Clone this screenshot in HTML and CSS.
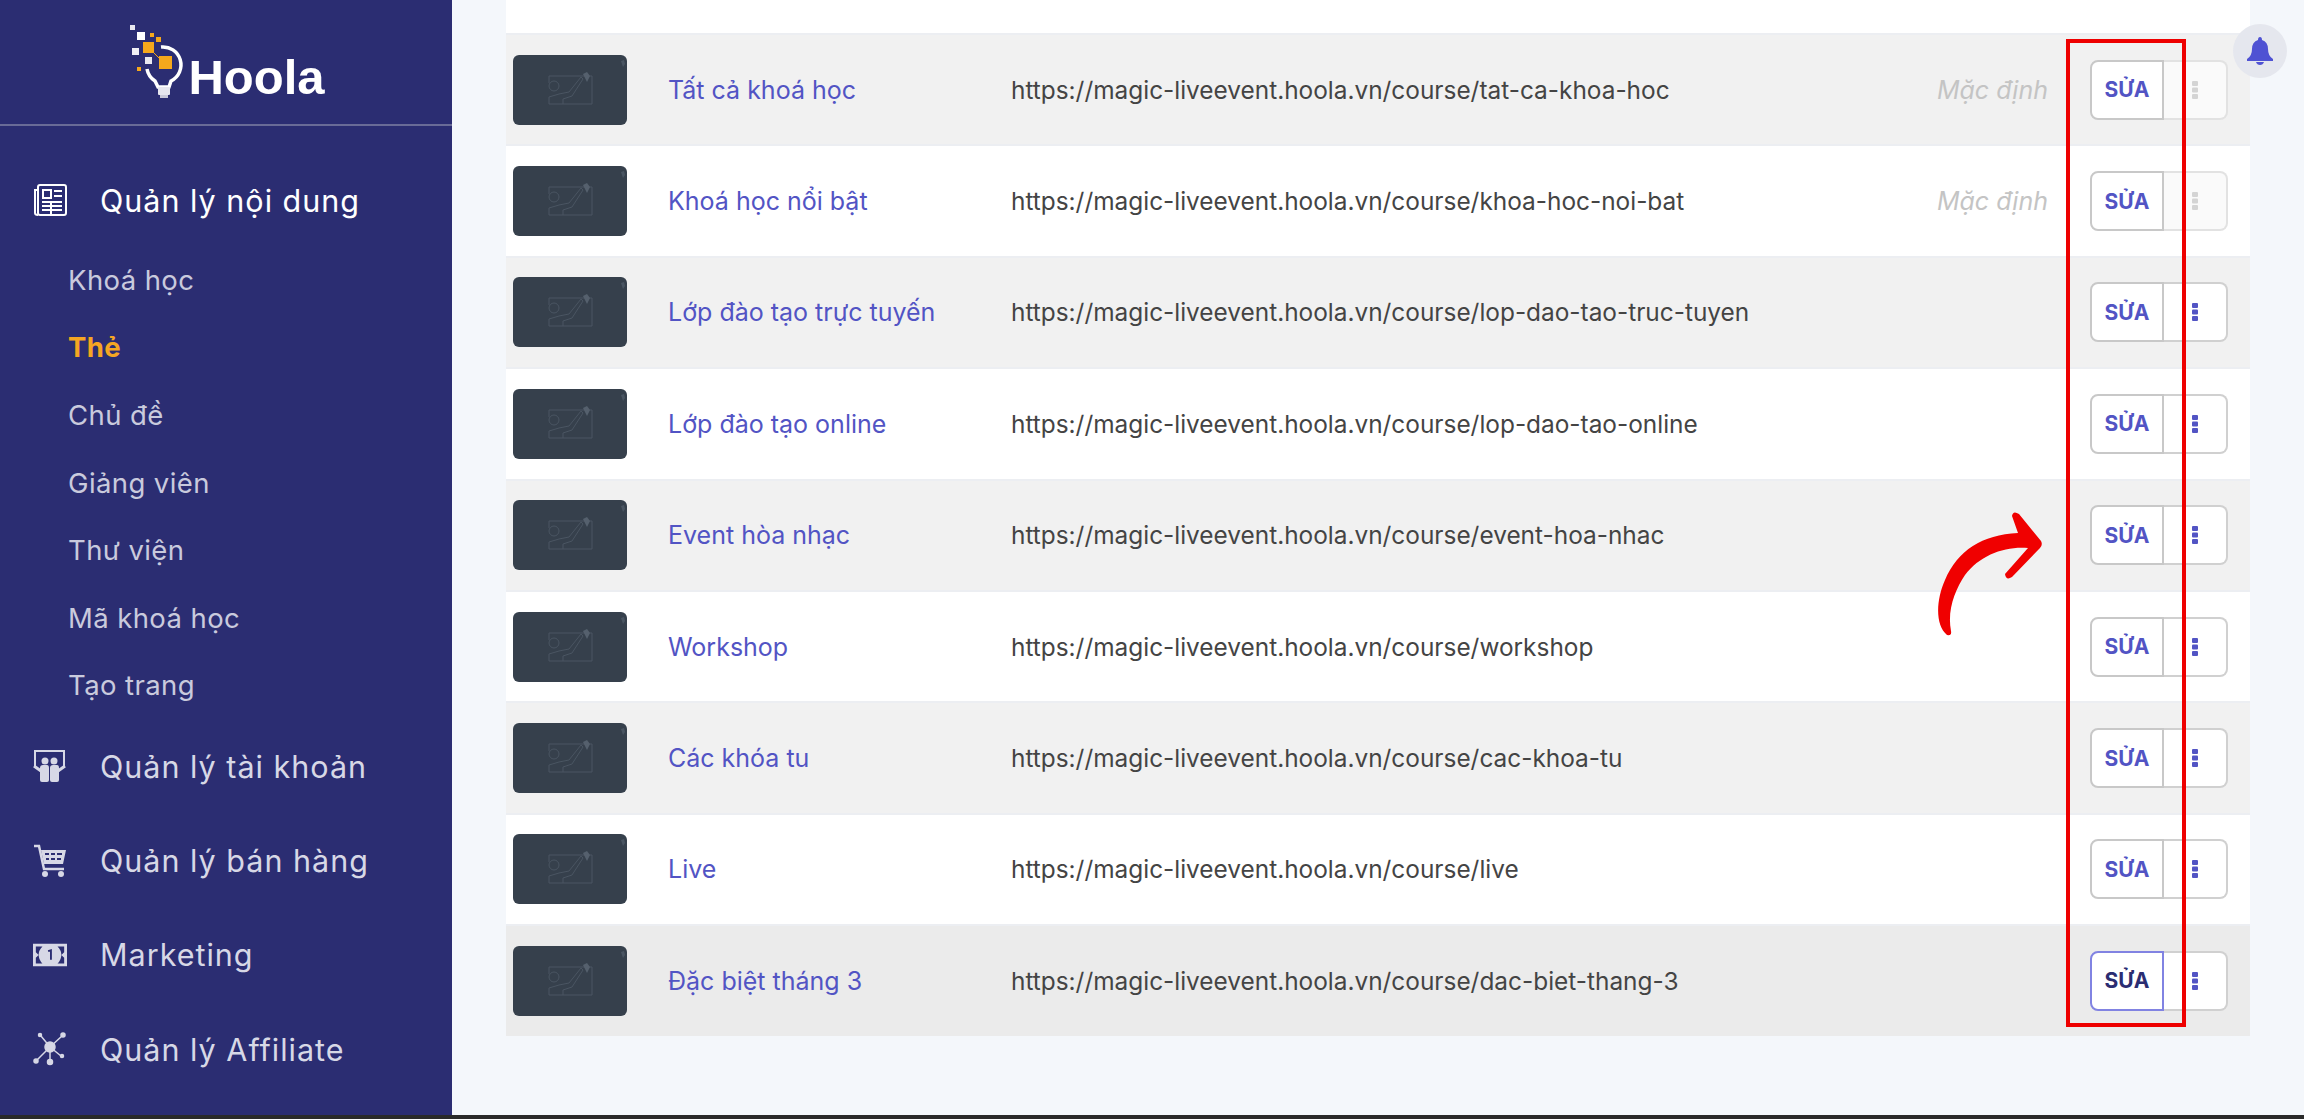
FILE: index.html
```html
<!DOCTYPE html>
<html lang="vi">
<head>
  <meta charset="UTF-8" />
  <title>Thẻ - Hoola</title>
  <link rel="stylesheet" href="styles.css">
</head>
<body>

  <!-- Shared thumbnail placeholder -->
  <svg class="defs" aria-hidden="true">
    <symbol id="thumb-icon" viewBox="0 0 114 70">
      <path d="M41 21H79V49H50M36 28V21H41" fill="none" stroke="#4a5562" stroke-width="1"/>
      <circle cx="41" cy="31" r="5" fill="none" stroke="#4a5562"/>
      <path d="M36 49V42L46 39 56 37 68 22 70 24 59 41 50 44V49Z" fill="none" stroke="#4a5562"/>
      <path d="M70 19L74 17 77 21 74 27 72 23Z" fill="#55606d"/>
      <path d="M108 6L111 5 112 9 110 12Z" fill="#4a5562"/>
    </symbol>
    <symbol id="dots" viewBox="0 0 6 18">
      <rect y="0" width="6" height="5" rx="1"/>
      <rect y="6.5" width="6" height="5" rx="1"/>
      <rect y="13" width="6" height="5" rx="1"/>
    </symbol>
  </svg>

  <div class="page">
    <!-- Sidebar -->
    <aside class="sidebar">
      <div class="logo">
        <svg class="logo-mark" width="54" height="74" viewBox="0 0 54 74">
          <rect x="0" y="0" width="5" height="5" fill="#e8e8f0"/>
          <rect x="7" y="7" width="8" height="8" fill="#fff"/>
          <rect x="20" y="8" width="4" height="4" fill="#f5a81c"/>
          <rect x="26" y="12" width="5" height="5" fill="#f5a81c"/>
          <rect x="13" y="17" width="11" height="11" fill="#f5a81c"/>
          <rect x="2" y="23" width="7" height="7" fill="#f0f0f5"/>
          <rect x="15" y="32" width="7" height="7" fill="#e8e8f0"/>
          <rect x="7" y="42" width="4" height="4" fill="#f5a81c"/>
          <rect x="29" y="31" width="13" height="13" fill="#f5a81c"/>
          <path d="M24 28L29 33" stroke="#f5a81c" stroke-width="1"/>
          <path d="M31 22A18 18 0 0 1 41 56L39 62H28L25 56A18 18 0 0 1 17 44" fill="none" stroke="#fff" stroke-width="3.5"/>
          <rect x="28" y="62" width="12" height="8" rx="1" fill="#e6e6ee"/>
          <rect x="30" y="70" width="8" height="3" fill="#c9c9d8"/>
        </svg>
        <span class="logo-text">Hoola</span>
      </div>

      <nav class="menu">
        <a class="menu-item active open" href="#">
          <svg class="menu-icon" viewBox="0 0 34 34" fill="none" stroke="currentColor" stroke-width="2">
            <rect x="5" y="2" width="28" height="30" rx="2"/>
            <path d="M5 7H2V30Q2 32 5 32"/>
            <rect x="10" y="7" width="8" height="8"/>
            <path d="M21 8H29M21 13H29M9 19H29M9 23H29M9 27H29M18 19V31"/>
          </svg>
          <span>Quản lý nội dung</span>
        </a>
        <div class="submenu">
          <a href="#">Khoá học</a>
          <a class="current" href="#">Thẻ</a>
          <a href="#">Chủ đề</a>
          <a href="#">Giảng viên</a>
          <a href="#">Thư viện</a>
          <a href="#">Mã khoá học</a>
          <a href="#">Tạo trang</a>
        </div>
        <a class="menu-item" href="#">
          <svg class="menu-icon" viewBox="0 0 34 34">
            <path d="M2 17V2H31V17" fill="none" stroke="currentColor" stroke-width="2"/>
            <path d="M1 17L8 22M32 17L25 22" fill="none" stroke="currentColor" stroke-width="3"/>
            <path d="M7 19Q7 16 10 16H14Q16 16 16 19V31Q16 33 14 33H9Q7 33 7 31Z" fill="currentColor"/>
            <path d="M17 19Q17 16 20 16H24Q26 16 26 19V31Q26 33 24 33H19Q17 33 17 31Z" fill="currentColor"/>
            <circle cx="12" cy="12" r="3.5" fill="currentColor"/>
            <circle cx="21" cy="12" r="3.5" fill="currentColor"/>
          </svg>
          <span>Quản lý tài khoản</span>
        </a>
        <a class="menu-item" href="#">
          <svg class="menu-icon" viewBox="0 0 34 34">
            <path d="M1 2H6L11 25H31" fill="none" stroke="currentColor" stroke-width="2.5"/>
            <path d="M8 6H33L30 20H11ZM12 9V11H16V9ZM18 9V11H22V9ZM24 9V11H29V9ZM13 14V16H16V14ZM18 14V16H22V14ZM24 14V16H28V14Z" fill="currentColor" fill-rule="evenodd"/>
            <circle cx="12" cy="30" r="3" fill="currentColor"/>
            <circle cx="28" cy="30" r="3" fill="currentColor"/>
          </svg>
          <span>Quản lý bán hàng</span>
        </a>
        <a class="menu-item" href="#">
          <svg class="menu-icon" viewBox="0 0 36 34">
            <path d="M0 5H36V29H0ZM3 8V14L6 17 3 20V26H10Q6 22 6 17T10 8ZM33 8H26Q30 12 30 17T26 26H33V20L30 17 33 14Z" fill="currentColor" fill-rule="evenodd"/>
            <circle cx="18" cy="17" r="8" fill="currentColor"/>
            <path d="M16 13L19 12V22" fill="none" stroke="#2b2d72" stroke-width="2"/>
          </svg>
          <span>Marketing</span>
        </a>
        <a class="menu-item" href="#">
          <svg class="menu-icon" viewBox="0 0 34 34" fill="currentColor" stroke="currentColor" stroke-width="1.5">
            <path d="M8 4L17 15 29 4M17 15L4 28M17 15V29M17 15L28 24" fill="none"/>
            <circle cx="17" cy="15" r="5"/>
            <circle cx="7" cy="3" r="1.5"/>
            <circle cx="30" cy="3" r="2"/>
            <circle cx="3" cy="29" r="2"/>
            <circle cx="17" cy="30" r="2.5"/>
            <circle cx="29" cy="24" r="1.5"/>
          </svg>
          <span>Quản lý Affiliate</span>
        </a>
      </nav>
    </aside>

    <!-- Main Content -->
    <main class="content">
      <div class="tag-table">
        <div class="table-top"></div>

        <div class="row">
          <svg class="thumb"><use href="#thumb-icon"/></svg>
          <a class="name" href="#">Tất cả khoá học</a>
          <span class="url">https://magic-liveevent.hoola.vn/course/tat-ca-khoa-hoc</span>
          <span class="default">Mặc định</span>
          <div class="actions"><button class="edit">SỬA</button><button class="more" disabled><svg><use href="#dots"/></svg></button></div>
        </div>

        <div class="row">
          <svg class="thumb"><use href="#thumb-icon"/></svg>
          <a class="name" href="#">Khoá học nổi bật</a>
          <span class="url">https://magic-liveevent.hoola.vn/course/khoa-hoc-noi-bat</span>
          <span class="default">Mặc định</span>
          <div class="actions"><button class="edit">SỬA</button><button class="more" disabled><svg><use href="#dots"/></svg></button></div>
        </div>

        <div class="row">
          <svg class="thumb"><use href="#thumb-icon"/></svg>
          <a class="name" href="#">Lớp đào tạo trực tuyến</a>
          <span class="url">https://magic-liveevent.hoola.vn/course/lop-dao-tao-truc-tuyen</span>
          <div class="actions"><button class="edit">SỬA</button><button class="more"><svg><use href="#dots"/></svg></button></div>
        </div>

        <div class="row">
          <svg class="thumb"><use href="#thumb-icon"/></svg>
          <a class="name" href="#">Lớp đào tạo online</a>
          <span class="url">https://magic-liveevent.hoola.vn/course/lop-dao-tao-online</span>
          <div class="actions"><button class="edit">SỬA</button><button class="more"><svg><use href="#dots"/></svg></button></div>
        </div>

        <div class="row">
          <svg class="thumb"><use href="#thumb-icon"/></svg>
          <a class="name" href="#">Event hòa nhạc</a>
          <span class="url">https://magic-liveevent.hoola.vn/course/event-hoa-nhac</span>
          <div class="actions"><button class="edit">SỬA</button><button class="more"><svg><use href="#dots"/></svg></button></div>
        </div>

        <div class="row">
          <svg class="thumb"><use href="#thumb-icon"/></svg>
          <a class="name" href="#">Workshop</a>
          <span class="url">https://magic-liveevent.hoola.vn/course/workshop</span>
          <div class="actions"><button class="edit">SỬA</button><button class="more"><svg><use href="#dots"/></svg></button></div>
        </div>

        <div class="row">
          <svg class="thumb"><use href="#thumb-icon"/></svg>
          <a class="name" href="#">Các khóa tu</a>
          <span class="url">https://magic-liveevent.hoola.vn/course/cac-khoa-tu</span>
          <div class="actions"><button class="edit">SỬA</button><button class="more"><svg><use href="#dots"/></svg></button></div>
        </div>

        <div class="row">
          <svg class="thumb"><use href="#thumb-icon"/></svg>
          <a class="name" href="#">Live</a>
          <span class="url">https://magic-liveevent.hoola.vn/course/live</span>
          <div class="actions"><button class="edit">SỬA</button><button class="more"><svg><use href="#dots"/></svg></button></div>
        </div>

        <div class="row hovered">
          <svg class="thumb"><use href="#thumb-icon"/></svg>
          <a class="name" href="#">Đặc biệt tháng 3</a>
          <span class="url">https://magic-liveevent.hoola.vn/course/dac-biet-thang-3</span>
          <div class="actions"><button class="edit">SỬA</button><button class="more"><svg><use href="#dots"/></svg></button></div>
        </div>
      </div>
    </main>
  </div>

  <div class="bottom-strip"></div>

  <!-- Floating bell -->
  <div class="bell">
    <svg width="26" height="28" viewBox="0 0 26 28" fill="#4f52d3">
      <path d="M13 0Q15 0 15 3Q21 5 21 12Q21 19 26 22V24H0V22Q5 19 5 12Q5 5 11 3Q11 0 13 0Z"/>
      <path d="M9 25H17Q16 28 13 28T9 25Z"/>
    </svg>
  </div>

  <!-- Annotations drawn over the screenshot -->
  <div class="highlight-box"></div>
  <svg class="arrow" width="120" height="140" viewBox="0 0 120 140">
    <path fill="#f00000" d="M17 130C5 120 6 95 15 75C28 45 52 30 88 28L82 11Q83 5 89 9L111 36Q113 40 110 43L82 72Q76 76 75 69L98 43C75 41 50 50 35 70C25 85 17 105 21 126Q22 131 17 130Z"/>
  </svg>

</body>
</html>
```

FILE: styles.css
```css
:root {
  --sidebar-bg: #2b2d72;
  --page-bg: #f4f7fb;
  --link: #5254c4;
}

* {
  box-sizing: border-box;
  margin: 0;
  padding: 0;
}

html,
body {
  height: 100%;
  overflow: hidden;
}

body {
  font-family: Inter, "Noto Sans", sans-serif;
  background-color: var(--page-bg);
  display: flex;
  flex-direction: column;
}

a {
  text-decoration: none;
}

.defs {
  display: none;
}

.page {
  display: flex;
  height: 1115px;
}

.bottom-strip {
  height: 4px;
  background-color: #2a2a2a;
}

/* Sidebar */
.sidebar {
  width: 452px;
  flex-shrink: 0;
  background-color: var(--sidebar-bg);
  color: #d7d8e6;
}

.logo {
  height: 126px;
  border-bottom: 2px solid #696b97;
  display: flex;
  justify-content: center;
  align-items: flex-start;
  gap: 4px;
  padding: 25px 0 0 3px;
}

.logo-text {
  font-family: "Liberation Sans", Arial, sans-serif;
  font-weight: 700;
  font-size: 49px;
  line-height: 1;
  color: #fff;
  margin-top: 28px;
}

.menu {
  padding-top: 40px;
}

.menu-item {
  display: flex;
  align-items: center;
  gap: 33px;
  height: 94.3px;
  padding-left: 33px;
  color: #d7d8e6;
  font-size: 30.5px;
  letter-spacing: 1px;
}

.menu-item.open {
  height: 68px;
  margin-bottom: 12px;
}

.menu-item.active {
  color: #fff;
}

.menu-icon {
  width: 34px;
  height: 34px;
  flex-shrink: 0;
}

.submenu a {
  display: flex;
  align-items: center;
  height: 67.6px;
  padding-left: 68px;
  font-size: 27.5px;
  letter-spacing: 0.4px;
  color: #c9cadd;
}

.submenu a.current {
  color: #f5a623;
  font-weight: 700;
}

/* Table */
.content {
  flex: 1;
  padding: 0 54px;
}

.table-top {
  height: 33px;
  background-color: #fff;
}

.row {
  display: flex;
  align-items: center;
  height: 111.4px;
  padding: 0 22px 0 7px;
  background-color: #fff;
  border-top: 2px solid #eceef2;
}

.row:nth-child(even) {
  background-color: #f1f1f1;
}

.row.hovered {
  background-color: #ebebeb;
}

.thumb {
  width: 114px;
  height: 70px;
  flex-shrink: 0;
  background-color: #36404c;
  border-radius: 6px;
}

.name {
  width: 343px;
  flex-shrink: 0;
  margin-left: 41px;
  color: var(--link);
  font-size: 25px;
}

.url {
  flex: 1;
  color: #444;
  font-size: 24.4px;
}

.default {
  margin-right: 42px;
  color: #c4c4c4;
  font-size: 25px;
  font-style: italic;
}

.actions {
  display: flex;
  flex-shrink: 0;
}

.actions button {
  height: 60px;
  background-color: #fff;
  cursor: pointer;
  font-family: inherit;
}

.edit {
  width: 74px;
  border: 2px solid #c8c8c8;
  border-radius: 8px 0 0 8px;
  color: var(--link);
  font-size: 21px;
  font-weight: 700;
}

.more {
  width: 64px;
  border: 2px solid #d0d0d0;
  border-left: none;
  border-radius: 0 8px 8px 0;
  display: flex;
  justify-content: center;
  align-items: center;
  fill: var(--link);
}

.more svg {
  width: 6px;
  height: 18px;
}

.more:disabled {
  background-color: #fafafa;
  border-color: #e2e2e2;
  fill: #d4d4d4;
}

.hovered .edit {
  border-color: #8183e2;
  color: #2b2d72;
}

/* Floating items */
.bell {
  position: absolute;
  left: 2233px;
  top: 24px;
  width: 54px;
  height: 54px;
  border-radius: 50%;
  background-color: #e5e7ee;
  display: flex;
  justify-content: center;
  align-items: center;
}

.highlight-box {
  position: absolute;
  left: 2066px;
  top: 39px;
  width: 120px;
  height: 988px;
  border: 4px solid #ee0000;
}

.arrow {
  position: absolute;
  left: 1930px;
  top: 505px;
}
```
